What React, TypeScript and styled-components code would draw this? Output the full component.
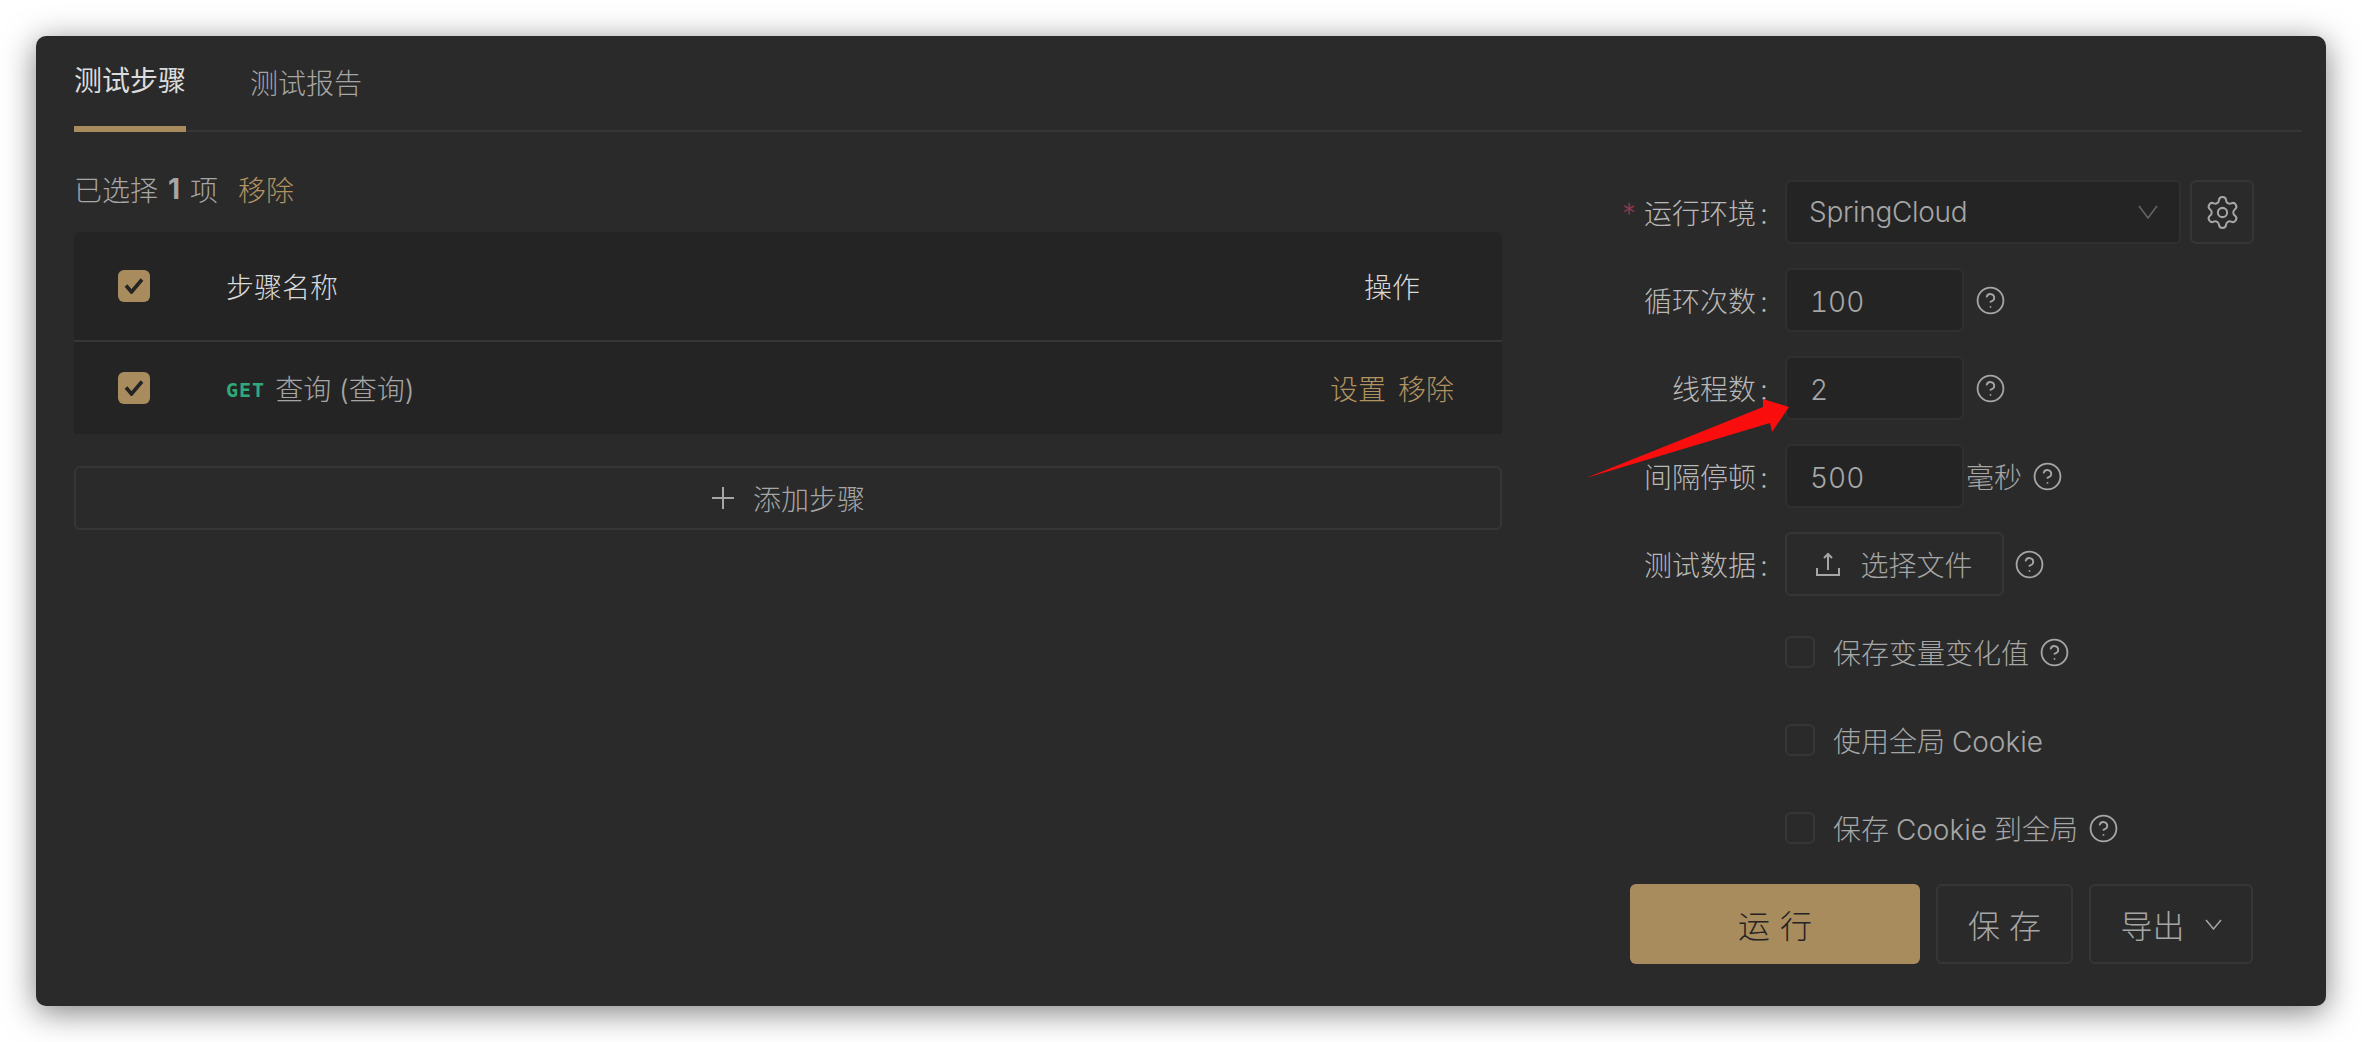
import React from 'react';
import styled, { createGlobalStyle } from 'styled-components';
import { CircleHelp, Settings } from 'lucide-react';

const GlobalStyle = createGlobalStyle`
  html, body {
    margin: 0;
    background: #fff;
  }
  body {
    font-family: "Inter", "Noto Sans CJK SC", sans-serif;
    font-weight: 300;
    font-size: 28px;
    color: #a6a6a6;
  }
  * {
    box-sizing: border-box;
  }
`;

const gold = '#a98c5d';
const goldText = '#b09360';
const line = '#363636';

const Page = styled.div`
  width: 2362px;
  height: 1042px;
  padding: 36px;
  overflow: hidden;
  position: relative;
`;

const Panel = styled.div`
  width: 2290px;
  height: 970px;
  background: #2a2a2a;
  border-radius: 10px;
  box-shadow: 0 6px 32px rgba(0, 0, 0, 0.5);
  padding: 0 24px 0 38px;
`;

const TabBar = styled.div`
  height: 96px;
  display: flex;
  gap: 64px;
  border-bottom: 2px solid ${line};
`;

const Tab = styled.div<{ $active?: boolean }>`
  height: 96px;
  line-height: 40px;
  padding-top: ${(p) => (p.$active ? '25px' : '28px')};
  color: ${(p) => (p.$active ? '#dcdcdc' : '#a6a6a6')};
  font-weight: ${(p) => (p.$active ? 400 : 300)};
  border-bottom: ${(p) => (p.$active ? `6px solid ${gold}` : 'none')};
`;

const Main = styled.div`
  display: flex;
  justify-content: space-between;
  padding-right: 48px;
`;

const StepsColumn = styled.div`
  width: 1428px;
  padding-top: 32px;
`;

const SelectedInfo = styled.div`
  height: 48px;
  padding-top: 2px;
  margin-bottom: 20px;
  display: flex;
  align-items: center;
`;

const SelectedCount = styled.b`
  font-weight: 700;
  margin: 0 10px;
`;

const LinkText = styled.span`
  color: ${goldText};
`;

const RemoveAll = styled(LinkText)`
  margin-left: 20px;
`;

const Table = styled.div`
  background: #242424;
  border-radius: 6px 6px 0 0;
`;

const TableRow = styled.div<{ $head?: boolean }>`
  height: ${(p) => (p.$head ? '110px' : '92px')};
  display: flex;
  align-items: center;
  padding: 0 48px 0 44px;
  border-bottom: ${(p) => (p.$head ? `2px solid ${line}` : 'none')};
  color: ${(p) => (p.$head ? '#d9d9d9' : '#a6a6a6')};
`;

const CheckBox = styled.span`
  width: 32px;
  height: 32px;
  border-radius: 6px;
  background: ${gold};
  color: #242424;
  display: flex;
  align-items: center;
  justify-content: center;
  flex: none;
  margin-right: 76px;
`;

const NameCell = styled.div`
  flex: 1;
  display: flex;
  align-items: center;
`;

const Method = styled.span`
  font-family: "DejaVu Sans Mono", "Liberation Mono", monospace;
  font-size: 20px;
  font-weight: 700;
  letter-spacing: 1px;
  color: #2fa97a;
  margin-right: 10px;
  position: relative;
  top: 2px;
`;

const HeadAction = styled.div`
  margin-right: 34px;
`;

const RowActions = styled.div`
  display: flex;
  gap: 12px;
`;

const AddButton = styled.div`
  height: 64px;
  margin-top: 32px;
  border: 2px solid ${line};
  border-radius: 6px;
  display: flex;
  align-items: center;
  justify-content: center;
  gap: 18px;
`;

const FormColumn = styled.div`
  width: 654px;
  padding-top: 48px;
  display: flex;
  flex-direction: column;
  gap: 24px;
`;

const FormRow = styled.div`
  height: 64px;
  display: flex;
  align-items: center;
`;

const Label = styled.label`
  width: 185px;
  flex: none;
  text-align: right;
  padding-right: 17px;
  color: #b8b8b8;
  white-space: nowrap;
`;

const Colon = styled.span`
  margin-left: 4px;
`;

const Required = styled.span`
  color: #8a3a4c;
  margin-right: 8px;
`;

const Field = styled.div<{ $width: number }>`
  width: ${(p) => p.$width}px;
  height: 64px;
  background: #242424;
  border: 2px solid #303030;
  border-radius: 6px;
  display: flex;
  align-items: center;
  padding: 0 23px;
`;

const NumberField = styled(Field)`
  padding-top: 3px;
  font-variant-numeric: tabular-nums;
`;

const SelectField = styled(Field)`
  justify-content: space-between;
  letter-spacing: -0.3px;
  padding: 0 21px 0 22px;
`;

const GearButton = styled.div`
  width: 64px;
  height: 64px;
  margin-left: 9px;
  border: 2px solid ${line};
  border-radius: 6px;
  display: flex;
  align-items: center;
  justify-content: center;
`;

const Unit = styled.span`
  margin-left: 2px;
  margin-right: 10px;
`;

const HelpIcon = styled(CircleHelp)<{ $left?: number }>`
  margin-left: ${(p) => p.$left ?? 11}px;
  flex: none;
`;

const UploadButton = styled.div`
  width: 219px;
  height: 64px;
  border: 2px solid ${line};
  border-radius: 6px;
  display: flex;
  align-items: center;
  justify-content: center;
  gap: 20px;
`;

const EmptyBox = styled.span`
  width: 30px;
  height: 32px;
  border: 2px solid ${line};
  border-radius: 6px;
  flex: none;
  margin-right: 18px;
`;

const CheckLabel = styled.span`
  word-spacing: -1px;
`;

const Actions = styled.div`
  height: 80px;
  padding-left: 30px;
  display: flex;
  gap: 16px;
`;

const ActionButton = styled.div<{ $width: number; $primary?: boolean }>`
  width: ${(p) => p.$width}px;
  height: 80px;
  border-radius: 6px;
  display: flex;
  align-items: center;
  justify-content: center;
  gap: 20px;
  font-size: 32px;
  padding-left: ${(p) => (p.$primary ? '10px' : '0')};
  letter-spacing: ${(p) => (p.$primary ? '10px' : '0')};
  background: ${(p) => (p.$primary ? gold : 'transparent')};
  color: ${(p) => (p.$primary ? '#242424' : '#a6a6a6')};
  border: ${(p) => (p.$primary ? 'none' : `2px solid ${line}`)};
`;

const Annotation = styled.svg`
  position: absolute;
  left: 0;
  top: 0;
  width: 2362px;
  height: 1042px;
  pointer-events: none;
`;

const UploadIcon = () => (
  <svg width="24" height="24" viewBox="0 0 24 24" fill="none" stroke="currentColor" strokeWidth="2">
    <path d="M12 18V2M8 6l4-4 4 4M1 16v7h22v-7" />
  </svg>
);

const PlusIcon = () => (
  <svg width="24" height="24" viewBox="0 0 24 24" fill="none" stroke="currentColor" strokeWidth="2">
    <path d="M12 1v22M1 12h22" />
  </svg>
);

const TickIcon = () => (
  <svg width="20" height="16" viewBox="0 0 20 16" fill="none" stroke="currentColor" strokeWidth="3.6">
    <path d="M2 7.5L7.5 14L18 1.5" />
  </svg>
);

const VeeIcon = ({ width, height, color }: { width: number; height: number; color?: string }) => (
  <svg width={width} height={height} viewBox={`0 0 ${width} ${height}`} fill="none" stroke={color ?? 'currentColor'} strokeWidth="1.5">
    <path d={`M1 1L${width / 2} ${height - 1}L${width - 1} 1`} />
  </svg>
);

const Help = ({ left }: { left?: number }) => <HelpIcon size={31} strokeWidth={1.4} $left={left} />;

const App: React.FC = () => {
  return (
    <Page>
      <GlobalStyle />
      <Panel>
        <TabBar>
          <Tab $active>测试步骤</Tab>
          <Tab>测试报告</Tab>
        </TabBar>
        <Main>
          <StepsColumn>
            <SelectedInfo>
              已选择<SelectedCount>1</SelectedCount>项<RemoveAll>移除</RemoveAll>
            </SelectedInfo>
            <Table>
              <TableRow $head>
                <CheckBox>
                  <TickIcon />
                </CheckBox>
                <NameCell>步骤名称</NameCell>
                <HeadAction>操作</HeadAction>
              </TableRow>
              <TableRow>
                <CheckBox>
                  <TickIcon />
                </CheckBox>
                <NameCell>
                  <Method>GET</Method>查询 (查询)
                </NameCell>
                <RowActions>
                  <LinkText>设置</LinkText>
                  <LinkText>移除</LinkText>
                </RowActions>
              </TableRow>
            </Table>
            <AddButton>
              <PlusIcon />
              添加步骤
            </AddButton>
          </StepsColumn>
          <FormColumn>
            <FormRow>
              <Label>
                <Required>*</Required>运行环境<Colon>:</Colon>
              </Label>
              <SelectField $width={396}>
                SpringCloud
                <VeeIcon width={20} height={14} color="#666" />
              </SelectField>
              <GearButton>
                <Settings size={37} strokeWidth={1.3} />
              </GearButton>
            </FormRow>
            <FormRow>
              <Label>循环次数<Colon>:</Colon></Label>
              <NumberField $width={179}>100</NumberField>
              <Help />
            </FormRow>
            <FormRow>
              <Label>线程数<Colon>:</Colon></Label>
              <NumberField $width={179}>2</NumberField>
              <Help />
            </FormRow>
            <FormRow>
              <Label>间隔停顿<Colon>:</Colon></Label>
              <NumberField $width={179}>500</NumberField>
              <Unit>毫秒</Unit>
              <Help left={0} />
            </FormRow>
            <FormRow>
              <Label>测试数据<Colon>:</Colon></Label>
              <UploadButton>
                <UploadIcon />
                选择文件
              </UploadButton>
              <Help left={10} />
            </FormRow>
            <FormRow>
              <Label />
              <EmptyBox />
              <CheckLabel>保存变量变化值</CheckLabel>
              <Help left={10} />
            </FormRow>
            <FormRow>
              <Label />
              <EmptyBox />
              <CheckLabel>使用全局 Cookie</CheckLabel>
            </FormRow>
            <FormRow>
              <Label />
              <EmptyBox />
              <CheckLabel>保存 Cookie 到全局</CheckLabel>
              <Help left={10} />
            </FormRow>
            <Actions>
              <ActionButton $width={290} $primary>
                运行
              </ActionButton>
              <ActionButton $width={137}>保 存</ActionButton>
              <ActionButton $width={164}>
                导出
                <VeeIcon width={17} height={11} />
              </ActionButton>
            </Actions>
          </FormColumn>
        </Main>
      </Panel>
      <Annotation viewBox="0 0 2362 1042">
        <polygon points="1586,478 1763,407 1763,399 1789,407 1772,432 1770,423" fill="#fa0d0d" />
      </Annotation>
    </Page>
  );
};

export default App;
